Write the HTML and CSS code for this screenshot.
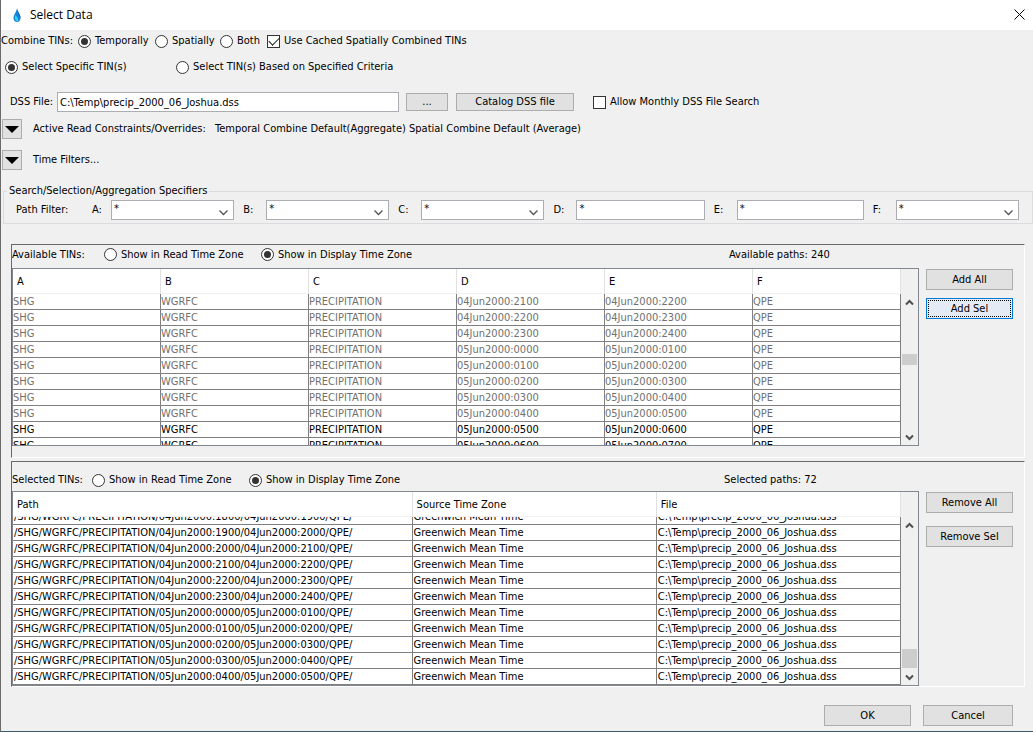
FILE: index.html
```
<!DOCTYPE html>
<html lang="en">
<head>
<meta charset="UTF-8" />
<title>Select Data</title>
<link rel="stylesheet" href="styles.css">
</head>
<body>

<header class="titlebar">
  <svg class="drop" width="8" height="15" viewBox="0 0 8 15">
    <path d="M4 0 C4.5 4 8 7 7.5 10.5 C7.2 13 5.5 14 4 14 C2.5 14 .8 13 .5 10.5 C.2 7 3.6 4 4 0Z" fill="#1583d8" />
    <path d="M2.5 7 C1.5 9 1.5 11.500 3.500 13 L5 13 C6 11 4 9 2.500 7Z" fill="#35d3f5" />
    <path d="M4 0 C4.500 4 8 7 7.500 10.500 C6.500 7 4.500 5 4 0Z" fill="#0b4f9e" />
  </svg>
  <h1>Select Data</h1>
  <button class="close" aria-label="Close">
    <svg width="11" height="11" viewBox="0 0 11 11"><path d="M.5 .5 L10.500 10.500 M10.500 .5 L.5 10.500" stroke="#000" fill="none" /></svg>
  </button>
</header>

<main>
  <div class="row combine">
    <span class="caption">Combine TINs:</span>
    <label class="temporally"><input type="radio" name="combine" checked />Temporally</label>
    <label class="spatially"><input type="radio" name="combine" />Spatially</label>
    <label class="both"><input type="radio" name="combine" />Both</label>
    <label><input type="checkbox" checked />Use Cached Spatially Combined TINs</label>
  </div>

  <div class="row mode">
    <label><input type="radio" name="mode" checked />Select Specific TIN(s)</label>
    <label><input type="radio" name="mode" />Select TIN(s) Based on Specified Criteria</label>
  </div>

  <div class="row dss">
    <label class="caption" for="dssFile">DSS File:</label>
    <input type="text" id="dssFile" value="C:\Temp\precip_2000_06_Joshua.dss" />
    <button class="browse">...</button>
    <button class="catalog">Catalog DSS file</button>
    <label><input type="checkbox" />Allow Monthly DSS File Search</label>
  </div>

  <div class="row expander">
    <button class="toggle" aria-label="Show constraints"><svg width="14" height="7" viewBox="0 0 14 7"><path d="M0 0H14L7 7Z" /></svg></button>
    <span class="name">Active Read Constraints/Overrides:</span>
    <span class="temporal">Temporal Combine Default(Aggregate)</span>
    <span>Spatial Combine Default (Average)</span>
  </div>
  <div class="row expander">
    <button class="toggle" aria-label="Show time filters"><svg width="14" height="7" viewBox="0 0 14 7"><path d="M0 0H14L7 7Z" /></svg></button>
    <span>Time Filters...</span>
  </div>

  <fieldset class="specifiers">
    <legend>Search/Selection/Aggregation Specifiers</legend>
    <div class="filters">
      <span>Path Filter:</span>
      <label for="partA">A:</label><select id="partA"><option>*</option></select>
      <label for="partB">B:</label><select id="partB"><option>*</option></select>
      <label for="partC">C:</label><select id="partC"><option>*</option></select>
      <label for="partD">D:</label><input type="text" id="partD" value="*" />
      <label for="partE">E:</label><input type="text" id="partE" value="*" />
      <label for="partF">F:</label><select id="partF"><option>*</option></select>
    </div>
  </fieldset>

  <section class="panel available">
    <div class="row zone">
      <span class="caption">Available TINs:</span>
      <label><input type="radio" name="availZone" />Show in Read Time Zone</label>
      <label><input type="radio" name="availZone" checked />Show in Display Time Zone</label>
      <span class="count">Available paths: 240</span>
    </div>
    <div class="content">
      <div class="pane">
        <div class="scroller">
          <table>
            <thead><tr><th>A</th><th>B</th><th>C</th><th>D</th><th>E</th><th>F</th></tr></thead>
            <tbody id="availableRows"></tbody>
          </table>
        </div>
        <div class="scrollbar">
          <svg width="9" height="7" viewBox="0 0 9 7"><path d="M1 5.500 L4.500 2 L8 5.500" /></svg>
          <div class="track"><div class="thumb"></div></div>
          <svg width="9" height="7" viewBox="0 0 9 7"><path d="M1 1.500 L4.500 5 L8 1.500" /></svg>
        </div>
      </div>
      <div class="actions">
        <button>Add All</button>
        <button class="focused">Add Sel</button>
      </div>
    </div>
  </section>

  <section class="panel selected">
    <div class="row zone">
      <span class="caption">Selected TINs:</span>
      <label><input type="radio" name="selZone" />Show in Read Time Zone</label>
      <label><input type="radio" name="selZone" checked />Show in Display Time Zone</label>
      <span class="count">Selected paths: 72</span>
    </div>
    <div class="content">
      <div class="pane">
        <div class="scroller" id="selectedScroller">
          <table>
            <thead><tr><th class="path">Path</th><th>Source Time Zone</th><th>File</th></tr></thead>
            <tbody id="selectedRows"></tbody>
          </table>
        </div>
        <div class="scrollbar">
          <svg width="9" height="7" viewBox="0 0 9 7"><path d="M1 5.500 L4.500 2 L8 5.500" /></svg>
          <div class="track"><div class="thumb"></div></div>
          <svg width="9" height="7" viewBox="0 0 9 7"><path d="M1 1.500 L4.500 5 L8 1.500" /></svg>
        </div>
      </div>
      <div class="actions">
        <button>Remove All</button>
        <button>Remove Sel</button>
      </div>
    </div>
  </section>

  <footer>
    <button class="ok">OK</button>
    <button class="cancel">Cancel</button>
  </footer>
</main>

<script>
  const times = [
    '04Jun2000:1800', '04Jun2000:1900', '04Jun2000:2000', '04Jun2000:2100',
    '04Jun2000:2200', '04Jun2000:2300', '04Jun2000:2400', '05Jun2000:0100',
    '05Jun2000:0200', '05Jun2000:0300', '05Jun2000:0400', '05Jun2000:0500',
    '05Jun2000:0600', '05Jun2000:0700'
  ];

  // a block that ends at 2400 is followed by one that starts at 0000
  function startOf(i) {
    return times[i] === '04Jun2000:2400' ? '05Jun2000:0000' : times[i];
  }

  function addRow(body, cells, used) {
    const tr = document.createElement('tr');
    if (used) tr.className = 'used';
    cells.forEach(text => {
      const td = document.createElement('td');
      td.textContent = text;
      tr.appendChild(td);
    });
    body.appendChild(tr);
  }

  const available = document.getElementById('availableRows');
  for (let i = 3; i < 13; i++) {
    addRow(available, ['SHG', 'WGRFC', 'PRECIPITATION', startOf(i), times[i + 1], 'QPE'], i < 11);
  }

  const selected = document.getElementById('selectedRows');
  for (let i = 0; i < 11; i++) {
    const path = `/SHG/WGRFC/PRECIPITATION/${startOf(i)}/${times[i + 1]}/QPE/`;
    addRow(selected, [path, 'Greenwich Mean Time', 'C:\\Temp\\precip_2000_06_Joshua.dss']);
  }

  const scroller = document.getElementById('selectedScroller');
  scroller.scrollTop = scroller.scrollHeight;
</script>

</body>
</html>
```
FILE: styles.css
```
* {
  box-sizing: border-box;
}
body {
  margin: 0;
  min-height: 100vh;
  background: #f0f0f0;
  border-left: 1px solid #6a6a6a;
  border-bottom: 1px solid #3c5a68;
  color: #000;
  font-family: "DejaVu Sans Condensed", Tahoma, sans-serif;
  font-size: 11px;
  line-height: 14px;
}
button, input, select {
  font: inherit;
  color: inherit;
  margin: 0;
}
.titlebar {
  display: flex;
  align-items: center;
  height: 30px;
  padding: 0 8px 0 12px;
  background: #fff;
}
.titlebar h1 {
  flex: 1;
  margin: 0 0 0 9px;
  font: 12px/16px "Open Sans", sans-serif;
}
.close {
  display: flex;
  padding: 0 0 2px;
  border: none;
  background: none;
}
.row, .row label {
  display: flex;
  align-items: center;
  white-space: nowrap;
}
.row label {
  gap: 4px;
}
input[type="radio"], input[type="checkbox"] {
  appearance: none;
  flex: none;
  display: grid;
  place-items: center;
  width: 13px;
  height: 13px;
  border: 1px solid #333;
  background: #fff;
}
input[type="radio"] {
  border-radius: 50%;
}
input[type="radio"]:checked::before {
  content: "";
  width: 7px;
  height: 7px;
  border-radius: 50%;
  background: #333;
}
input[type="checkbox"]:checked::before {
  content: "";
  width: 9px;
  height: 5px;
  margin-bottom: 3px;
  border-left: 1px solid #222;
  border-bottom: 1px solid #222;
  transform: rotate(-45deg);
}
input[type="text"], select {
  width: 100%;
  height: 20px;
  padding: 0 2px;
  border: 1px solid #abadb3;
  border-radius: 0;
  background: #fff;
}
select {
  appearance: none;
  background: #fff url("data:image/svg+xml,%3Csvg xmlns='http://www.w3.org/2000/svg' width='9' height='6'%3E%3Cpath d='M.5 .5L4.5 4.5L8.5 .5' fill='none' stroke='%23555' stroke-width='1.3'/%3E%3C/svg%3E") no-repeat right 5px top 9px;
}
main button {
  height: 21px;
  padding: 0;
  border: 1px solid #adadad;
  background: #e1e1e1;
}

.combine {
  height: 22px;
}
.combine .caption, .temporally {
  width: 77px;
}
.spatially {
  width: 65px;
}
.both {
  width: 47px;
}
.mode {
  height: 30px;
  padding-left: 4px;
}
.mode label {
  width: 171px;
}
.dss {
  height: 40px;
  padding-left: 9px;
}
.dss .caption {
  width: 47px;
}
.dss input[type="text"] {
  width: 342px;
}
.dss .browse {
  width: 42px;
  height: 18px;
  margin: 0 8px 0 7px;
}
.dss .catalog {
  width: 118px;
  height: 18px;
  margin-right: 19px;
}
.expander {
  height: 31px;
  padding: 0 0 17px 1px;
}
main .toggle {
  display: grid;
  place-items: center;
  width: 20px;
  height: 20px;
  margin-right: 11px;
}
.expander .name {
  width: 182px;
}
.expander .temporal {
  width: 194px;
}

.specifiers {
  margin: 0 0 0 2px;
  padding: 2px 13px 3px 12px;
  border: 1px solid #dcdcdc;
}
.specifiers legend {
  margin-left: -9px;
  padding: 0 2px;
}
.filters {
  display: grid;
  grid-template-columns: 67px 28px 123fr 32px 123fr 32px 123fr 32px 128fr 32px 127fr 32px 123fr;
  align-items: center;
}
.filters label {
  padding-left: 9px;
}
.filters input, .filters select {
  min-width: 0;
  padding-bottom: 3px;
}

.panel {
  margin: 0 8px 0 10px;
  border: 1px solid;
  border-color: #696969 #fff #fff #696969;
}
.available {
  margin-top: 20px;
  padding-bottom: 11px;
}
.selected {
  margin-top: 3px;
}
.zone {
  height: 23px;
  padding-bottom: 4px;
}
.zone .caption {
  width: 92px;
}
.zone label {
  width: 157px;
}
.zone .count {
  width: 295px;
  margin-left: auto;
}
.selected .zone {
  height: 29px;
  padding: 7px 0 0;
}
.selected .caption {
  width: 80px;
}
.selected .count {
  width: 300px;
}
.content {
  display: flex;
  gap: 7px;
  padding-right: 11px;
}
.pane {
  flex: 1;
  display: flex;
  height: 178px;
  border: 1px solid #828790;
}
.selected .pane {
  height: 195px;
}
.scroller {
  flex: 1;
  overflow: hidden;
}
table {
  width: 100%;
  table-layout: fixed;
  border-collapse: separate;
  border-spacing: 0;
}
th {
  position: sticky;
  top: 0;
  height: 25px;
  padding: 2px 4px 0;
  border-right: 1px solid #e0e0e0;
  border-bottom: 1px solid #f0f0f0;
  background: #fff;
  font-weight: normal;
  text-align: left;
}
.path {
  width: 45%;
}
td {
  height: 16px;
  padding: 0;
  border-right: 1px solid #808080;
  border-bottom: 1px solid #808080;
  background: #fff;
  line-height: 15px;
  white-space: nowrap;
  overflow: hidden;
}
.selected td {
  padding-left: 1px;
}
.used td {
  color: #707070;
}
.scrollbar {
  display: flex;
  flex-direction: column;
  align-items: center;
  width: 17px;
  padding: 30px 1px 4px;
}
.scrollbar path {
  fill: none;
  stroke: #505050;
  stroke-width: 2;
}
.track {
  flex: 1;
  width: 100%;
}
.thumb {
  height: 11px;
  margin-top: 48px;
  background: #cdcdcd;
}
.selected .thumb {
  height: 19px;
  margin-top: 120px;
}
.actions {
  display: flex;
  flex-direction: column;
  gap: 8px;
  width: 87px;
  padding-top: 1px;
}
.selected .actions {
  gap: 13px;
}
main .focused {
  border-color: #0078d7;
  background: #e5ebf4;
  outline: 1px dotted #000;
  outline-offset: -3px;
}

footer {
  display: flex;
  justify-content: flex-end;
  gap: 12px;
  padding: 18px 20px 5px;
}
.ok {
  width: 87px;
}
.cancel {
  width: 90px;
}
```
